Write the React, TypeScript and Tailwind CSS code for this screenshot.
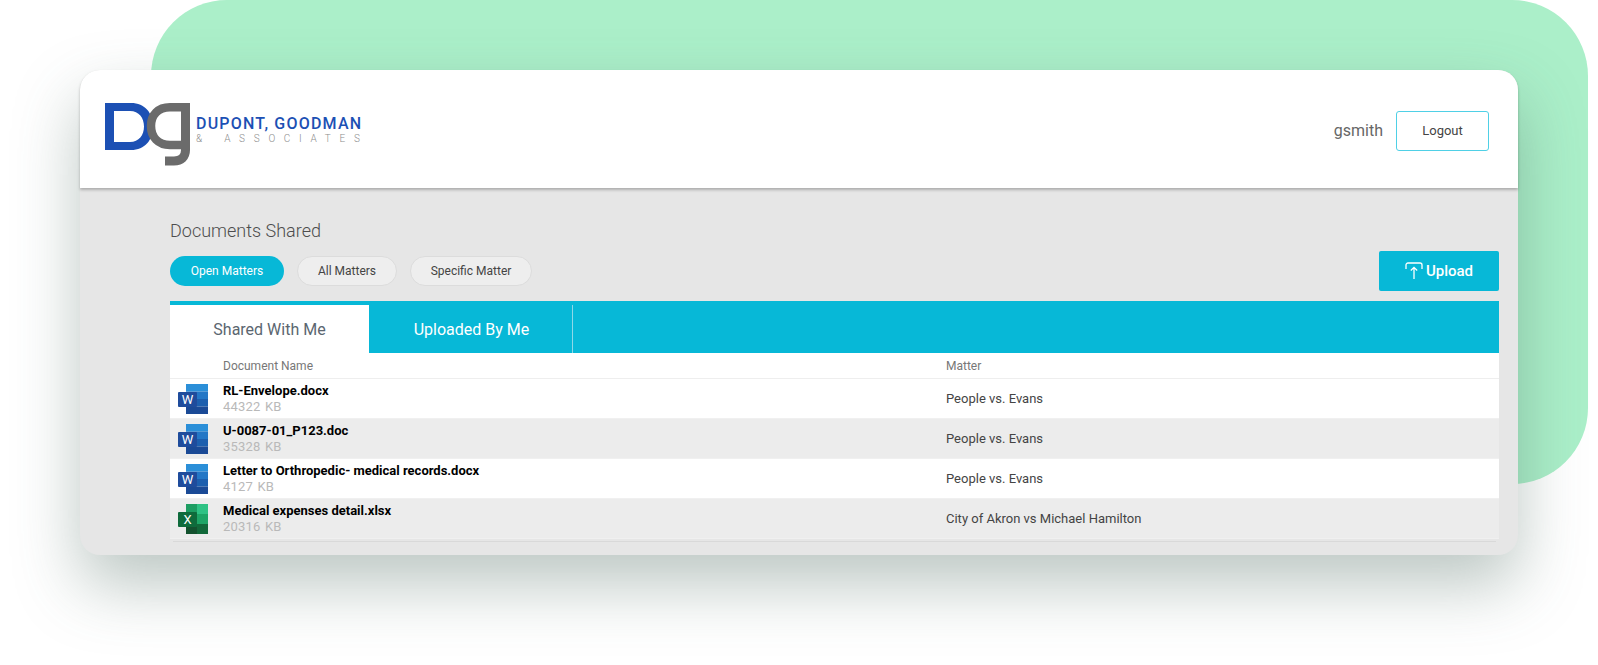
const rows = [
  { name: "RL-Envelope.docx", size: "44322 KB", matter: "People vs. Evans", kind: "word" },
  { name: "U-0087-01_P123.doc", size: "35328 KB", matter: "People vs. Evans", kind: "word" },
  { name: "Letter to Orthropedic- medical records.docx", size: "4127 KB", matter: "People vs. Evans", kind: "word" },
  { name: "Medical expenses detail.xlsx", size: "20316 KB", matter: "City of Akron vs Michael Hamilton", kind: "excel" },
]

function Logo() {
  return (
    <svg width="86" height="63" viewBox="105 103 86 63" className="shrink-0">
      <path
        fillRule="evenodd"
        fill="#1c50b4"
        d="M105 103H131C145 103 153 113 153 126.500C153 140 145 150 131 150H105ZM114 111V142H130C139 142 144 135 144 126.500C144 118 139 111 130 111Z"
      />
      <path
        fill="none"
        stroke="#6b6b6b"
        strokeWidth="8.500"
        d="M190 107.300H170C158 107.300 151 115 151 126C151 137 158 145 170 145H185.500"
      />
      <path
        fill="none"
        stroke="#6b6b6b"
        strokeWidth="9"
        d="M185.500 104V150C185.500 157 181 161 174 161H165"
      />
    </svg>
  )
}

function FileIcon({ kind }: { kind: string }) {
  return (
    <svg width="30" height="30" viewBox="0 0 30 30" className="shrink-0">
      {kind === "word" ? (
        <>
          <rect x="8" y="0" width="22" height="7.500" fill="#2b8fd8" />
          <rect x="8" y="7.500" width="22" height="7.500" fill="#2477c6" />
          <rect x="8" y="15" width="22" height="7.500" fill="#1d5fae" />
          <rect x="8" y="22.500" width="22" height="7.500" fill="#1b4a96" />
          <rect x="0" y="8" width="19" height="15" rx="1" fill="#1f4c9c" />
        </>
      ) : (
        <>
          <rect x="8" y="0" width="11" height="10" fill="#1d9d62" />
          <rect x="19" y="0" width="11" height="10" fill="#2fc284" />
          <rect x="8" y="10" width="11" height="10" fill="#107c41" />
          <rect x="19" y="10" width="11" height="10" fill="#1ea566" />
          <rect x="8" y="20" width="11" height="10" fill="#14522f" />
          <rect x="19" y="20" width="11" height="10" fill="#12693a" />
          <rect x="0" y="8" width="19" height="15" rx="1" fill="#0f6b3c" />
        </>
      )}
      <text x="9.500" y="20" textAnchor="middle" fill="#fff" fontSize="13" fontFamily="Roboto, sans-serif">
        {kind === "word" ? "W" : "X"}
      </text>
    </svg>
  )
}

function UploadIcon() {
  return (
    <svg width="18" height="18" viewBox="0 0 18 18" fill="none" stroke="#fff" strokeWidth="1.300" className="shrink-0">
      <path d="M1 7V3C1 2 1.800 1 3 1H15C16.200 1 17 2 17 3V7" />
      <path d="M9 17V5.500M5.800 8.500L9 5.300L12.200 8.500" />
    </svg>
  )
}

export default function App() {
  return (
    <div className="relative w-[1598px] h-[665px] overflow-hidden bg-white font-['Roboto',sans-serif]">
      {/* Green blob behind the card */}
      <div className="absolute left-[151px] top-0 w-[1437px] h-[484px] rounded-[76px] bg-[#abefc9]" />

      <div className="relative ml-[80px] mt-[70px] w-[1438px] h-[485px] flex flex-col rounded-[20px] bg-[#e6e6e6] shadow-[0_30px_65px_rgba(70,100,90,0.36)]">
        {/* Header */}
        <header className="relative h-[118px] shrink-0 flex items-center justify-between pl-[25px] pr-[29px] pt-[4px] bg-white rounded-t-[20px] shadow-[0_2px_3px_rgba(0,0,0,0.25)]">
          <div className="flex items-start gap-[5px] mt-[6px]">
            <Logo />
            <div className="mt-[11px] w-[170px]">
              <div className="text-[16px] leading-[20px] font-medium tracking-[1.200px] text-[#1c50b4] whitespace-nowrap">
                DUPONT, GOODMAN
              </div>
              <div className="flex gap-[22px] text-[10px] leading-[10px] font-light text-[#8d8d8d] whitespace-nowrap">
                <span>&amp;</span>
                <span className="tracking-[8.700px]">ASSOCIATES</span>
              </div>
            </div>
          </div>
          <div className="flex items-center gap-[13px]">
            <span className="text-[16px] text-[#666]">gsmith</span>
            <button className="w-[93px] h-[40px] rounded-[3px] border border-[#4fd0e6] bg-white text-[13px] text-[#444]">
              Logout
            </button>
          </div>
        </header>

        {/* Content */}
        <main className="flex-1 pl-[90px] pr-[19px] pt-[31px]">
          <h1 className="text-[18px] leading-[24px] font-light text-[#4d4d4d]">Documents Shared</h1>
          <div className="mt-[11px] flex items-start justify-between h-[47px]">
            <div className="flex gap-[13px] mt-[2px]">
              <button className="w-[114px] h-[30px] rounded-full bg-[#07b8d7] text-[12px] text-white">Open Matters</button>
              <button className="w-[100px] h-[30px] rounded-full border border-[#dcdcdc] bg-[#eeeeee] text-[12px] text-[#444]">All Matters</button>
              <button className="w-[122px] h-[30px] rounded-full border border-[#dcdcdc] bg-[#eeeeee] text-[12px] text-[#444]">Specific Matter</button>
            </div>
            <button className="flex items-center justify-center gap-[3px] w-[120px] h-[40px] -mt-[3px] rounded-[2px] bg-[#07b8d7] text-[15px] font-medium text-white">
              <UploadIcon />
              Upload
            </button>
          </div>

          {/* Tabs */}
          <div className="flex h-[52px] bg-[#07b8d7] pt-[4px]">
            <div className="w-[199px] flex items-center justify-center pt-[2px] bg-white text-[16px] text-[#5b6670]">Shared With Me</div>
            <div className="w-[204px] flex items-center justify-center pl-[2px] pt-[2px] border-r border-[#8ed8e8] text-[16px] text-white">Uploaded By Me</div>
          </div>

          {/* Table */}
          <div className="flex h-[26px] items-center bg-white text-[12px] text-[#777] border-b border-[#eeeeee]">
            <div className="ml-[53px] w-[723px]">Document Name</div>
            <div>Matter</div>
          </div>
          {rows.map((row, i) => (
            <div
              key={row.name}
              className={`flex h-[40px] items-center border-b border-[#f0f0f0] ${i % 2 === 0 ? "bg-white" : "bg-[#ececec]"}`}
            >
              <div className="ml-[8px] w-[45px]">
                <FileIcon kind={row.kind} />
              </div>
              <div className="w-[723px]">
                <div className="text-[13px] leading-[16px] font-bold text-black">{row.name}</div>
                <div className="text-[13px] leading-[16px] tracking-[0.2px] [word-spacing:1px] text-[#b9b9b9]">{row.size}</div>
              </div>
              <div className="text-[13px] text-[#444]">{row.matter}</div>
            </div>
          ))}
          <div className="h-[3px] mx-[3px] border-b border-[#d9d9d9]" />
        </main>
      </div>
    </div>
  )
}
